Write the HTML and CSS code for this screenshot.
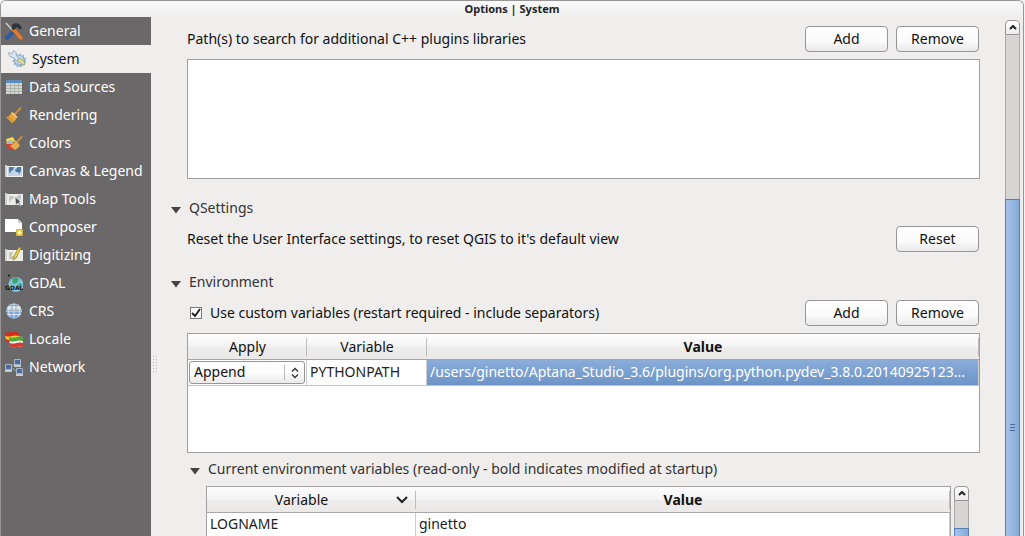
FILE: index.html
```html
<!DOCTYPE html>
<html lang="en">
<head>
<meta charset="utf-8">
<title>Options | System</title>
<link rel="stylesheet" href="styles.css">
</head>
<body>
<div class="window">
  <header class="titlebar">Options | System</header>
  <div class="body">
    <nav class="sidebar">
      <button class="nav-item"><svg class="icon" viewBox="0 0 18 18"><path d="M1 1l8 9" stroke="#c9c9c9" stroke-width="1.6"/><path d="M9 9L2 16" stroke="#2b5aa0" stroke-width="4" stroke-linecap="round"/><path d="M8 7l8 9" stroke="#e8762c" stroke-width="3.6" stroke-linecap="round"/><path d="M7 3c3-3 7-2 9 1l1 3-3 0-2-2-3 3-2-1z" fill="#2c3436"/></svg>General</button>
      <button class="nav-item selected" aria-current="page"><svg class="icon" viewBox="0 0 18 18"><circle cx="11.500" cy="10.500" r="6.200" fill="none" stroke="#8fabcb" stroke-width="1.200" stroke-dasharray="2 1.500"/><circle cx="11.500" cy="10.500" r="5" fill="#c5d9ee" stroke="#8fabcb" stroke-width="1.200"/><path d="M1 2l2 2 2-1V1c3 0 4 2 3 4l6 8-2 2-7-8C2 8 0 5 1 2z" fill="#dbe6f1" stroke="#8aa2bd" stroke-width=".8"/><path d="M9 10l6 5 2-1-1-3-5-3z" fill="#dfdc93" stroke="#8b986f" stroke-width=".7"/></svg>System</button>
      <button class="nav-item"><svg class="icon" viewBox="0 0 18 18"><path d="M1 2h16v14H1z" fill="#d3d7cf"/><path d="M1 2h16v3H1z" fill="#5d8dbb"/><path d="M1 7.500h16M1 10.500h16M1 13.500h16M5.500 5v11M9.500 5v11M13.500 5v11" stroke="#a9afa8" stroke-width=".9"/></svg>Data Sources</button>
      <button class="nav-item"><svg class="icon" viewBox="0 0 18 18"><path d="M15.500 2L10 8" stroke="#d28a30" stroke-width="2" stroke-linecap="round"/><path d="M7 6l5 5c-1 3-3 5-5 6L1 11c3 0 4-2 6-5z" fill="#e9a63e"/><path d="M7.500 6l5 5-1 1-5-5z" fill="#f4d28b"/><path d="M3 11l5 4" stroke="#bd761b" stroke-width=".7"/></svg>Rendering</button>
      <button class="nav-item"><svg class="icon" viewBox="0 0 18 18"><path d="M1 5l7-2 2 4-8 4z" fill="#f4dc45"/><path d="M2 7l5-1 1 4-5 2z" fill="#9fb8dc"/><path d="M1 10h5l6 6-8-1z" fill="#dc3b31"/><path d="M16.500 3L12 8" stroke="#d28a30" stroke-width="2" stroke-linecap="round"/><path d="M10 6l5 5c-1 2-3 4-5 5l-5-4c3-1 4-3 5-6z" fill="#e9a94a"/></svg>Colors</button>
      <button class="nav-item"><svg class="icon" viewBox="0 0 18 18"><path d="M2 4h16v11H2z" fill="#f0f1ec"/><path d="M0 3h2v12H0z" fill="#cfd0ca"/><path d="M3 5h14v9H3z" fill="#c2d5e8"/><path d="M4 5h5l-1 3-2 1-1 3-1-3zM10 8l3-3h3v4l-2 3-1-2-2 0z" fill="#4c7aa8"/></svg>Canvas &amp; Legend</button>
      <button class="nav-item"><svg class="icon" viewBox="0 0 18 18"><path d="M2 4h16v11H2z" fill="#ecece8"/><path d="M0 3h2v12H0z" fill="#cfd0ca"/><path d="M4 6h5l-1 3-2 1-1 3-1-3zM11 8l2-3h3v4l-2 1z" fill="#c4c6c2"/><path d="M10 7l6 5-2 0 2 4-1 0-2-3-2 2z" fill="#4b4e50" stroke="#ddd" stroke-width=".6"/></svg>Map Tools</button>
      <button class="nav-item"><svg class="icon" viewBox="0 0 18 18"><path d="M0 1h13l4 4v9H0z" fill="#fff"/><path d="M13 1v4h4z" fill="#cfcfcf"/><rect x="11" y="11" width="7" height="7" rx="1" fill="#d9bb2b"/><path d="M14.500 12v5M12 14.500h5M13 13l3 3M16 13l-3 3" stroke="#fff3b5" stroke-width="1.200"/></svg>Composer</button>
      <button class="nav-item"><svg class="icon" viewBox="0 0 18 18"><path d="M2 4h16v11H2z" fill="#eeeee8"/><path d="M0 3h2v12H0z" fill="#cfd0ca"/><path d="M4 6h4l-1 4h6l-2 3H4z" fill="#c4c6c0"/><path d="M14 1l2 1-5 10-3 2 1-4z" fill="#ead33c" stroke="#957c20" stroke-width=".7"/></svg>Digitizing</button>
      <button class="nav-item"><svg class="icon" viewBox="0 0 18 18"><circle cx="11" cy="10.500" r="7.500" fill="#7cc3df"/><path d="M7 5l4-2 3 2-2 4-4 1zM13 10l3-1 1 3-3 3z" fill="#43a46a"/><circle cx="4" cy="1.500" r="1" fill="#111"/><text x="0" y="16" class="icon-text">GDAL</text></svg>GDAL</button>
      <button class="nav-item"><svg class="icon" viewBox="0 0 18 18"><circle cx="9" cy="9" r="7.800" fill="#78a8dc"/><path d="M4.500 2.500h9L17 9H1z" fill="#cfd4d9"/><path d="M1 9h16M2 5.500h14M2 12.500h14M9 1.500v15M5 3c-2 4-2 8 0 12M13 3c2 4 2 8 0 12" stroke="#eef4fb" stroke-width=".8" fill="none"/><path d="M4 3.500h10M1.500 8.500h15M7 3v5M11 3v5" stroke="#81919f" stroke-width=".6"/></svg>CRS</button>
      <button class="nav-item"><svg class="icon" viewBox="0 0 18 18"><path d="M0 2q4 1 7 0t7 1v9q-4-1-7 0t-6-1z" fill="#d52b20"/><path d="M0 6q4 1 7 0t7 0v4q-4-1-7 0t-6-1z" fill="#f3cf2d"/><path d="M4 7q4 1 7 0t7 0v10q-4-1-7 0t-6-1z" fill="#f0f0ee"/><path d="M4 7q4 1 7 0t7 0v4q-4-1-7 0t-7 0z" fill="#55a735"/><path d="M4.500 13q4 1 7 0t6.500 0v4q-4-1-7 0t-6-1z" fill="#d4392d"/></svg>Locale</button>
      <button class="nav-item"><svg class="icon" viewBox="0 0 18 18"><path d="M7 10l4 3M7 8l2-2" stroke="#a6afb8" stroke-width=".9"/><g fill="#4a6c9f" stroke="#a9b6c6"><path d="M9.500 1.500h6v5h-6zM.5 6.500h6v5h-6zM11.500 10.500h6v5h-6z"/></g><path d="M9 8h7M0 13h7M11 17h7" stroke="#c9ccce" stroke-width="2"/></svg>Network</button>
    </nav>
    <div class="splitter" aria-hidden="true"></div>
    <main class="content">
      <section class="group">
        <div class="row">
          <span class="label">Path(s) to search for additional C++ plugins libraries</span>
          <button class="btn">Add</button><button class="btn">Remove</button>
        </div>
        <div class="list-box" role="listbox" aria-label="C++ plugin paths"></div>
      </section>
      <details class="section" open>
        <summary class="heading"><svg class="arrow" viewBox="0 0 12 8"><path d="M1 1h10L6 7.500z"/></svg>QSettings</summary>
        <div class="group">
          <div class="row">
            <span class="label">Reset the User Interface settings, to reset QGIS to it's default view</span>
            <button class="btn">Reset</button>
          </div>
        </div>
      </details>
      <details class="section" open>
        <summary class="heading"><svg class="arrow" viewBox="0 0 12 8"><path d="M1 1h10L6 7.500z"/></svg>Environment</summary>
        <div class="group">
          <div class="row">
            <label class="label check"><input class="checkbox" type="checkbox" checked>Use custom variables (restart required - include separators)</label>
            <button class="btn">Add</button><button class="btn">Remove</button>
          </div>
          <div class="list-box">
            <table class="table">
              <thead><tr><th class="col-apply">Apply</th><th class="col-var">Variable</th><th class="strong">Value</th></tr></thead>
              <tbody><tr>
                <td class="select-cell"><span class="select-wrap"><select class="select" aria-label="Apply"><option>Append</option></select><svg class="updown" viewBox="0 0 8 12"><path d="M1 4.500l3-3 3 3M1 7.500l3 3 3-3"/></svg></span></td>
                <td>PYTHONPATH</td>
                <td class="active">/users/ginetto/Aptana_Studio_3.6/plugins/org.python.pydev_3.8.0.20140925123...</td>
              </tr></tbody>
            </table>
          </div>
          <details class="subsection" open>
            <summary class="heading subheading"><svg class="arrow" viewBox="0 0 12 8"><path d="M1 1h10L6 7.500z"/></svg>Current environment variables (read-only - bold indicates modified at startup)</summary>
            <div class="env">
              <div class="list-box env-box">
                <table class="table compact">
                  <thead><tr><th class="col-name"><span class="sort"><span class="sort-name">Variable</span><svg class="chevron" viewBox="0 0 12 8"><path d="M1 1l5 5 5-5"/></svg></span></th><th class="strong">Value</th></tr></thead>
                  <tbody><tr><td>LOGNAME</td><td>ginetto</td></tr></tbody>
                </table>
              </div>
              <div class="scrollbar env-scroll"><button class="scroll-up" aria-label="Scroll up"><svg class="caret" viewBox="0 0 8 5"><path d="M1 4l3-3 3 3"/></svg></button><div class="track"></div><div class="thumb"></div></div>
            </div>
          </details>
        </div>
      </details>
    </main>
    <div class="scrollbar main-scroll"><button class="scroll-up" aria-label="Scroll up"><svg class="caret" viewBox="0 0 8 5"><path d="M1 4l3-3 3 3"/></svg></button><div class="track"></div><div class="thumb"><span class="grip"></span></div></div>
  </div>
</div>
</body>
</html>
```
FILE: styles.css
```css
* { box-sizing: border-box; }
body {
  margin: 0;
  height: 100vh;
  overflow: hidden;
  padding-right: 1px;
  background: #f4f4f4;
  color: #111;
  font: 14px/20px "Noto Sans", "Open Sans", sans-serif;
}
button, select { font: inherit; color: inherit; }
.window {
  display: flex;
  flex-direction: column;
  height: 100%;
  overflow: hidden;
  border: 1px solid #979596;
  border-bottom: 0;
  border-radius: 6px 6px 0 0;
  background: #efeeed;
}
.titlebar {
  flex: none;
  height: 16px;
  background: linear-gradient(#fafafa, #efeeed);
  color: #222;
  font-size: 11px;
  font-weight: 700;
  line-height: 16px;
  text-align: center;
}
.body { display: flex; flex: 1; min-height: 0; }
.sidebar { flex: none; width: 150px; background: #6a6869; }
.nav-item {
  display: flex;
  align-items: center;
  gap: 6px;
  width: 100%;
  height: 28px;
  padding: 0 4px;
  border: 0;
  background: none;
  color: #fff;
  white-space: nowrap;
}
.nav-item.selected { padding-left: 7px; background: #efeeed; color: #111; }
.icon { flex: none; width: 18px; height: 18px; fill: none; }
.icon-text { fill: #111; font: 700 6px "DejaVu Sans", sans-serif; }
.splitter {
  flex: none;
  align-self: flex-start;
  width: 5px;
  height: 18px;
  margin: 338px 13px 0 1px;
  background: radial-gradient(circle, #b5b3b3 0 1px, transparent 1px) 0 0 / 3px 3px;
}
.content { flex: 1; min-width: 0; padding: 9px 25px 0 0; }
.group { padding-left: 17px; }
.row { display: flex; align-items: center; gap: 8px; padding-right: 1px; }
.label { flex: 1; white-space: nowrap; }
.btn {
  width: 83px;
  height: 26px;
  padding: 0;
  border: 1px solid #979596;
  border-radius: 4px;
  background: linear-gradient(#fff, #fbfbfb 55%, #ebe9e9);
  line-height: 22px;
}
.list-box {
  height: 120px;
  margin-top: 7px;
  overflow: hidden;
  border: 1px solid #a19f9f;
  background: #fff;
}
.heading {
  display: flex;
  align-items: center;
  gap: 7px;
  height: 20px;
  color: #333;
  list-style: none;
  white-space: nowrap;
}
.section { margin-top: 19px; }
.section > .group { padding-top: 8px; padding-bottom: 1px; }
.arrow { flex: none; width: 12px; height: 8px; margin-top: 4px; fill: #444; }
.check { display: flex; align-items: center; gap: 8px; padding-left: 3px; }
.checkbox {
  appearance: none;
  width: 12px;
  height: 12px;
  margin: 0;
  border: 1px solid #777;
  background: #fff url("data:image/svg+xml,%3Csvg xmlns='http://www.w3.org/2000/svg' viewBox='0 0 10 10'%3E%3Cpath d='M1 5l3 3 5-7' fill='none' stroke='%23222' stroke-width='2'/%3E%3C/svg%3E");
}
.table { width: 100%; table-layout: fixed; border-collapse: separate; border-spacing: 0; }
.table th {
  height: 26px;
  padding: 0;
  border-bottom: 1px solid #a9a7a7;
  background:
    linear-gradient(#bdbbbb, #bdbbbb) right center / 1px 18px no-repeat,
    linear-gradient(#fdfdfd, #f4f3f3 50%, #eeedec 51%, #eae9e8);
  font-weight: 400;
}
.table th.strong { font-weight: 700; }
.col-apply { width: 119px; }
.col-var { width: 120px; }
.col-name { width: 209px; }
.table td {
  height: 26px;
  padding: 0 3px 2px;
  overflow: hidden;
  border-right: 1px solid #cfcdcd;
  border-bottom: 1px solid #c3c1c1;
  color: #222;
  line-height: 20px;
  white-space: nowrap;
}
.table.compact td { height: 24px; }
.table td.active { background: linear-gradient(#8aadda, #6c94c6); color: #fff; }
.table td.select-cell { padding: 1px; }
.select-wrap { display: block; position: relative; }
.select {
  display: block;
  appearance: none;
  width: 100%;
  height: 23px;
  padding: 0 4px 2px;
  border: 1px solid #979596;
  border-radius: 3px;
  background:
    linear-gradient(#bbb, #bbb) right 19px center / 1px 15px no-repeat,
    linear-gradient(#fff, #fbfbfb 55%, #ebe9e9);
  color: #111;
}
.updown { position: absolute; top: 6px; right: 6px; width: 8px; height: 12px; fill: none; stroke: #333; stroke-width: 1.4; pointer-events: none; }
.subheading { margin-top: 6px; margin-left: 2px; }
.env { display: flex; gap: 3px; padding: 7px 11px 0 19px; }
.env-box { flex: 1; margin: 0; }
.sort { display: flex; align-items: center; padding-right: 8px; }
.sort-name { flex: 1; text-align: center; }
.chevron { flex: none; width: 12px; height: 8px; }
.chevron, .caret { fill: none; stroke: #222; stroke-width: 2; }
.scrollbar { display: flex; flex: none; flex-direction: column; width: 15px; overflow: hidden; }
.main-scroll { margin: 3px 3px 0 0; }
.env-scroll { height: 120px; }
.scroll-up {
  display: flex;
  flex: none;
  align-items: center;
  justify-content: center;
  height: 15px;
  padding: 0;
  border: 1px solid #979596;
  border-radius: 4px 4px 0 0;
  background: linear-gradient(#fff, #eceaea);
}
.caret { width: 8px; height: 5px; }
.track { flex: none; height: 164px; border: solid #aaa8a8; border-width: 0 1px; background: #d6d5d4; }
.env-scroll .track { height: 27px; }
.thumb {
  display: flex;
  flex: none;
  align-items: center;
  justify-content: center;
  height: 457px;
  border: 1px solid #557fb5;
  background: linear-gradient(90deg, #a5c1e6, #96b7e1 50%, #84a9d9);
}
.grip { width: 5px; height: 7px; background: repeating-linear-gradient(#48699a 0 1px, transparent 1px 3px); }
```
